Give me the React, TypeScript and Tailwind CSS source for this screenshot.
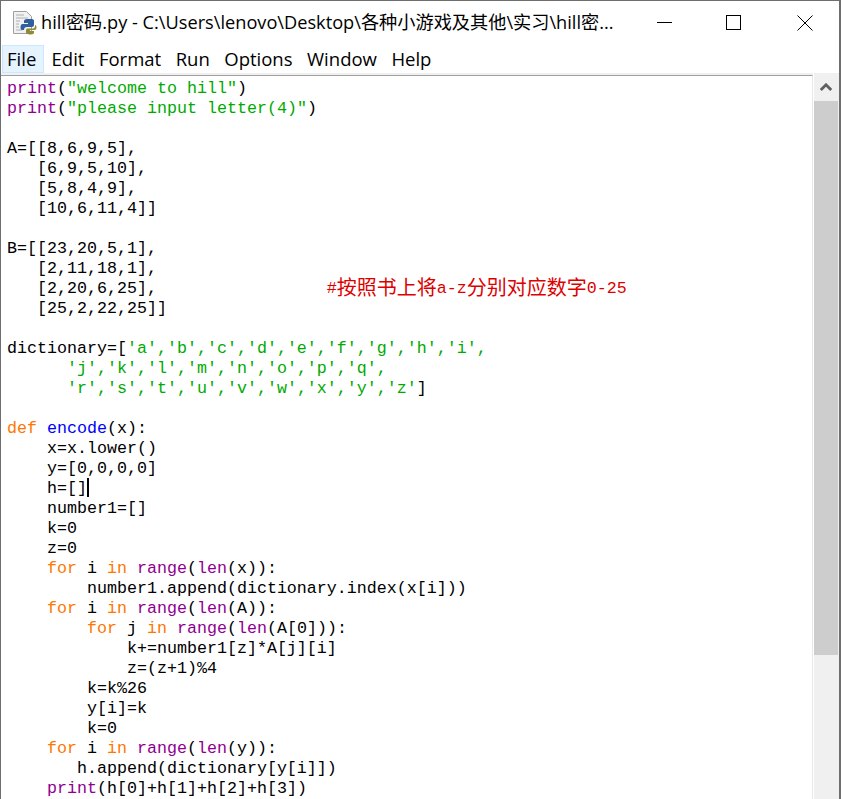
const orange = "text-[#ff7700]";
const purple = "text-[#900090]";
const green = "text-[#00aa00]";
const blue = "text-[#0000ff]";
const red = "text-[#dd0000]";

type Seg = string | [string, string];

const forLine = (indent: string, v: string, arg: string): Seg[] => [
    indent,
    ["for", orange],
    ` ${v} `,
    ["in", orange],
    " ",
    ["range", purple],
    "(",
    ["len", purple],
    `(${arg})):`,
];

const letters = (list: string) => list.split("").map((c) => `'${c}',`).join("");

const lines: Seg[][] = [
    [["print", purple], "(", ['"welcome to hill"', green], ")"],
    [["print", purple], "(", ['"please input letter(4)"', green], ")"],
    [],
    ["A=[[8,6,9,5],"],
    ["   [6,9,5,10],"],
    ["   [5,8,4,9],"],
    ["   [10,6,11,4]]"],
    [],
    ["B=[[23,20,5,1],"],
    ["   [2,11,18,1],"],
    ["   [2,20,6,25],"],
    ["   [25,2,22,25]]"],
    [],
    ["dictionary=[", [letters("abcdefghi"), green]],
    ["      ", [letters("jklmnopq"), green]],
    ["      ", [letters("rstuvwxy") + "'z'", green], "]"],
    [],
    [["def", orange], " ", ["encode", blue], "(x):"],
    ["    x=x.lower()"],
    ["    y=[0,0,0,0]"],
    ["    h=[]"],
    ["    number1=[]"],
    ["    k=0"],
    ["    z=0"],
    forLine("    ", "i", "x"),
    ["        number1.append(dictionary.index(x[i]))"],
    forLine("    ", "i", "A"),
    forLine("        ", "j", "A[0]"),
    ["            k+=number1[z]*A[j][i]"],
    ["            z=(z+1)%4"],
    ["        k=k%26"],
    ["        y[i]=k"],
    ["        k=0"],
    forLine("    ", "i", "y"),
    ["       h.append(dictionary[y[i]])"],
    [["    print", purple], "(h[0]+h[1]+h[2]+h[3])"],
];

const menus = ["File", "Edit", "Format", "Run", "Options", "Window", "Help"];

const FileIcon = () => (
    <svg width="24" height="26" viewBox="0 0 24 26" className="shrink-0">
        <path d="M.5 1.500h13l5 5v17H.5z" fill="#f1f1f1" stroke="#a0a0a0" />
        <path d="M3 5h8M3 8h12M3 11h4M3 14h3M3 17h3M3 20h6" stroke="#b0b0b0" />
        <path d="M14 9h5c1.500 0 2 1 2 2v4c0 1-1 2-2 2h-5c-2 0-3 1-3 3H9c-1 0-1.500-1-1.500-2.500S8 14 9.500 14H15v-1h-4v-2c0-1 1-2 3-2z" fill="#2f5f9e" />
        <path d="M22 15c1 0 1.500 1 1.500 2.500S23 20 21.500 20H17v1h4v1.500c0 1-1 2-3 2s-5-.5-5-2V20c0-1 1-1.500 2-1.500h5c1.500 0 2-1 2-3.500z" fill="#8f8a35" />
    </svg>
);

const App = () => {
    return (
        <div className="flex h-[799px] w-[841px] flex-col overflow-hidden border-t border-r-2 border-l border-[#6e6e6e] bg-white">
            {/* title bar */}
            <div className="flex h-[43px] shrink-0 items-center pl-[12px] font-['Open_Sans','Noto_Sans_CJK_SC',sans-serif] text-[18.2px] text-black">
                <FileIcon />
                <span className="ml-[4px] w-[600px] whitespace-pre">
                    hill密码.py - C:\Users\lenovo\Desktop\各种小游戏及其他\实习\hill密...
                </span>
                <div className="ml-[16px] h-px w-[15px] bg-black" />
                <div className="ml-[54px] h-[15px] w-[15px] border border-black" />
                <svg width="16" height="16" viewBox="0 0 16 16" className="ml-[56px]">
                    <path d="M.5.5l15 15M15.500.5l-15 15" stroke="#000" fill="none" />
                </svg>
            </div>

            {/* menu */}
            <div className="flex h-[29px] shrink-0 items-end pl-[1px] font-['Open_Sans',sans-serif] text-[18.5px] text-black">
                {menus.map((m, i) => (
                    <span
                        key={m}
                        className={
                            i === 0
                                ? "flex h-[28px] items-center border border-[#cce8ff] bg-[#e5f3ff] pr-[7px] pl-[4px]"
                                : "flex h-[28px] items-center px-[7.25px]"
                        }
                    >
                        {m}
                    </span>
                ))}
            </div>

            <div className="flex min-h-0 flex-1">
                {/* editor */}
                <div className="h-[800px] w-[812px] shrink-0 overflow-hidden border-t-2 border-t-[#f0f0f0]">
                    <div className="h-full border-t border-r border-t-[#a0a0a0] border-r-[#e8e8e8] pt-[3px] pl-[6px] font-['Liberation_Mono',monospace] text-[16.67px] leading-[20px] text-black">
                        {lines.map((segs, i) => (
                            <div key={i} className="h-[20px] whitespace-pre">
                                {segs.map((s, j) =>
                                    typeof s === "string" ? (
                                        <span key={j}>{s}</span>
                                    ) : (
                                        <span key={j} className={s[1]}>
                                            {s[0]}
                                        </span>
                                    ),
                                )}
                                {i === 20 && (
                                    <span className="relative inline-block h-[19px] w-0 align-top">
                                        <span className="absolute top-[-1px] left-0 h-[19px] w-[2px] bg-black" />
                                    </span>
                                )}
                                {i === 10 && (
                                    <span className={red}>
                                        {"                 #"}
                                        <span className="align-[-2px] font-['Noto_Sans_CJK_SC',sans-serif] text-[20px] leading-[0px]">按照书上将</span>
                                        a-z
                                        <span className="align-[-2px] font-['Noto_Sans_CJK_SC',sans-serif] text-[20px] leading-[0px]">分别对应数字</span>
                                        0-25
                                    </span>
                                )}
                            </div>
                        ))}
                    </div>
                </div>

                {/* scrollbar */}
                <div className="ml-[1px] flex w-[25px] shrink-0 flex-col bg-[#f0f0f0]">
                    <div className="flex h-[28px] items-center justify-center pr-[1px]">
                        <svg width="12" height="8" viewBox="0 0 12 8">
                            <path d="M.8 7L6 1.800 11.200 7" fill="none" stroke="#606060" strokeWidth="2.800" />
                        </svg>
                    </div>
                    <div className="mr-[1px] h-[554px] bg-[#cdcdcd]" />
                </div>
            </div>
        </div>
    );
};

export default App;
